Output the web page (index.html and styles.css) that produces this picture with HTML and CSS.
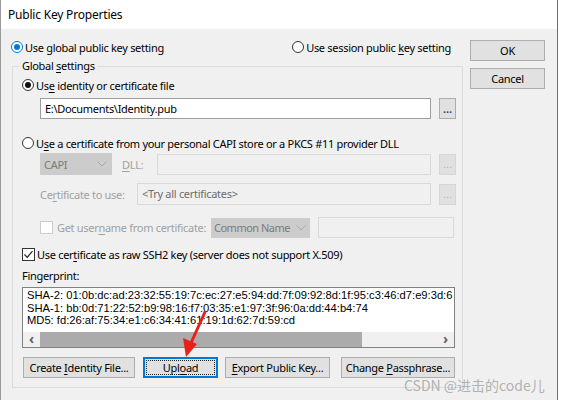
FILE: index.html
```html
<!DOCTYPE html>
<html lang="en">
<head>
    <meta charset="UTF-8">
    <title>Public Key Properties</title>
    <link rel="stylesheet" href="styles.css">
</head>
<body>

    <div class="window">
        <div class="titlebar">Public Key Properties</div>

        <div class="client">
            <div class="main">
                <div class="scope-row">
                    <label class="opt"><span class="radio checked focus"></span><span>Use global public key setting</span></label>
                    <label class="opt session"><span class="radio"></span><span>Use session public <u>k</u>ey setting</span></label>
                </div>

                <div class="group">
                    <div class="group-title">Global <u>s</u>ettings</div>

                    <label class="opt row-radio1"><span class="radio checked"></span><span>Us<u>e</u> identity or certificate file</span></label>

                    <div class="field-row row-file">
                        <div class="textbox file-box">E:\Documents\Identity.pub</div>
                        <button class="browse">...</button>
                    </div>

                    <label class="opt row-radio2"><span class="radio"></span><span>U<u>s</u>e a certificate from your personal CAPI store or a PKCS #11 provider DLL</span></label>

                    <div class="field-row row-capi">
                        <div class="select capi-select"><span>CAPI</span> <svg class="chev" width="10" height="6" viewBox="0 0 10 6"><path d="M0.5 0.5 L5 5 L9.5 0.5" fill="none" stroke="#a8a8a8" stroke-width="1"/></svg></div>
                        <span class="dim dll-label"><u>D</u>LL:</span>
                        <div class="textbox disabled dll-box"></div>
                        <button class="browse disabled">...</button>
                    </div>

                    <div class="field-row row-cert">
                        <span class="dim cert-label">Ce<u>r</u>tificate to use:</span>
                        <div class="textbox disabled cert-box">&lt;Try all certificates&gt;</div>
                        <button class="browse disabled">...</button>
                    </div>

                    <div class="field-row row-user">
                        <span class="check disabled"></span>
                        <span class="dim user-label">Get user<u>n</u>ame from certificate:</span>
                        <div class="select name-select"><span>Common Name</span> <svg class="chev" width="10" height="6" viewBox="0 0 10 6"><path d="M0.5 0.5 L5 5 L9.5 0.5" fill="none" stroke="#a8a8a8" stroke-width="1"/></svg></div>
                        <div class="textbox disabled user-box"></div>
                    </div>

                    <label class="opt row-raw">
                        <span class="check"><svg width="11" height="11" viewBox="0 0 11 11"><path d="M1.5 5.5 L4.2 8.3 L9.5 2.2" fill="none" stroke="#222" stroke-width="1.2"/></svg></span>
                        <span>Use cer<u>t</u>ificate as raw SSH2 key (server does not support X.509)</span>
                    </label>

                    <div class="fp-label">Fingerprint:</div>

                    <div class="fingerprint">
                        <div class="fp-text">
                            <div>SHA-2: 01:0b:dc:ad:23:32:55:19:7c:ec:27:e5:94:dd:7f:09:92:8d:1f:95:c3:46:d7:e9:3d:6</div>
                            <div>SHA-1: bb:0d:71:22:52:b9:98:16:f7:03:35:e1:97:3f:96:0a:dd:44:b4:74</div>
                            <div>MD5: fd:26:af:75:34:e1:c6:34:41:61:19:1d:62:7d:59:cd</div>
                        </div>
                        <div class="hscroll">
                            <span class="sb-btn">&lsaquo;</span>
                            <span class="sb-thumb"></span>
                            <span class="sb-track"></span>
                            <span class="sb-btn">&rsaquo;</span>
                        </div>
                    </div>

                    <div class="action-row">
                        <button class="btn btn-create">Create <u>I</u>dentity File...</button>
                        <button class="btn btn-upload"><span class="focus-ring">Upl<u>o</u>ad</span></button>
                        <button class="btn btn-export"><u>E</u>xport Public Key...</button>
                        <button class="btn btn-change">Change <u>P</u>assphrase...</button>
                    </div>
                </div>
            </div>

            <div class="side">
                <button class="btn side-btn">OK</button>
                <button class="btn side-btn">Cancel</button>
            </div>
        </div>

        <!-- annotation arrow pasted over the screenshot -->
        <svg class="arrow" width="561" height="400" viewBox="0 0 561 400">
            <path d="M205 312 L191 343" stroke="#e8201c" stroke-width="3" stroke-linecap="round"/>
            <path d="M186 357 L183 338 L197 344 Z" fill="#e8201c"/>
        </svg>

        <div class="watermark">CSDN @进击的code儿</div>
    </div>

</body>
</html>
```

FILE: styles.css
```css
body {
    margin: 0;
    padding: 0;
    background-color: #fff;
    font-family: 'Noto Sans', 'Liberation Sans', sans-serif;
    font-size: 11px;
    letter-spacing: -0.3px;
    color: #000;
}

u {
    text-decoration-thickness: 1px;
    text-underline-offset: 2px;
}

.window {
    position: relative;
    width: 556px;
    height: 400px;
    border-right: 1px solid #6f6f6f;
    border-left: 1px solid #9a9a9a;
    overflow: hidden;
}

.titlebar {
    height: 29px;
    line-height: 30px;
    padding-left: 7px;
    background-color: #fff;
    font-size: 12px;
    letter-spacing: -0.2px;
}

.client {
    display: flex;
    background-color: #f0f0f0;
    height: 371px;
}

.main {
    width: 451px;
    padding: 10px 0 0 11px;
}

.side {
    display: flex;
    flex-direction: column;
    gap: 7px;
    margin-left: 7px;
    padding-top: 11px;
}

/* radio / checkbox rows */

.opt {
    display: flex;
    align-items: center;
    height: 16px;
    white-space: nowrap;
}

.radio {
    box-sizing: border-box;
    width: 12px;
    height: 12px;
    border: 1px solid #333;
    border-radius: 50%;
    background-color: #fff;
    margin-right: 2px;
    display: flex;
    align-items: center;
    justify-content: center;
}

.radio.checked::after {
    content: '';
    width: 6px;
    height: 6px;
    border-radius: 50%;
    background-color: #111;
}

.radio.focus {
    border-color: #0078d7;
}

.radio.focus::after {
    background-color: #0078d7;
}

.check {
    box-sizing: border-box;
    width: 13px;
    height: 13px;
    border: 1px solid #333;
    background-color: #fff;
    margin-right: 2px;
    display: flex;
    align-items: center;
    justify-content: center;
}

.check.disabled {
    border-color: #cccccc;
}

.scope-row {
    display: flex;
    height: 16px;
    margin-left: -1px;
}

.session {
    margin-left: auto;
    margin-right: 12px;
}

/* group box */

.group {
    box-sizing: border-box;
    width: 451px;
    height: 322px;
    margin-top: 11px;
    border: 1px solid #dcdcdc;
    padding: 0 0 0 9px;
}

.group-title {
    width: fit-content;
    margin: -8px 0 0 -2px;
    padding: 0 2px;
    height: 14px;
    line-height: 14px;
    background-color: #f0f0f0;
}

.row-radio1 {
    margin-top: 4px;
}

.row-radio2 {
    margin-top: 16px;
}

.field-row {
    display: flex;
    align-items: center;
    padding-left: 18px;
}

.row-file {
    margin-top: 5px;
    height: 21px;
}

.row-capi {
    margin-top: 2px;
    height: 22px;
}

.row-cert {
    margin-top: 8px;
    height: 22px;
}

.row-user {
    margin-top: 12px;
    height: 21px;
}

.row-raw {
    margin-top: 8px;
}

.textbox {
    box-sizing: border-box;
    height: 21px;
    line-height: 19px;
    border: 1px solid #9d9d9d;
    background-color: #fff;
    padding-left: 4px;
    white-space: nowrap;
}

.textbox.disabled {
    border-color: #d9d9d9;
    background-color: #f0f0f0;
    color: #6d6d6d;
}

.file-box {
    width: 391px;
}

.browse {
    box-sizing: border-box;
    width: 17px;
    height: 21px;
    margin-left: 8px;
    padding: 0;
    border: 1px solid #adadad;
    background-color: #e1e1e1;
    font-family: 'Liberation Sans', sans-serif;
    font-size: 11px;
    font-weight: bold;
    letter-spacing: 0;
    line-height: 12px;
    color: #2d4f80;
}

.browse.disabled {
    border-color: #d6d6d6;
    background-color: #e0e0e0;
    color: #b4b4b4;
    font-weight: normal;
}

.dim {
    color: #a0a0a0;
    white-space: nowrap;
}

.select {
    box-sizing: border-box;
    height: 22px;
    display: flex;
    align-items: center;
    justify-content: space-between;
    padding: 0 5px 0 4px;
    background-color: #cccccc;
    color: #7b7b7b;
    white-space: nowrap;
}

.capi-select {
    width: 72px;
}

.dll-label {
    margin-left: 10px;
    width: 35px;
}

.dll-box {
    width: 274px;
}

.cert-label {
    width: 97px;
}

.cert-box {
    width: 294px;
    height: 22px;
}

.user-label {
    margin-left: 2px;
    width: 154px;
}

.name-select {
    width: 99px;
    height: 20px;
    padding: 0 4px 0 3px;
    letter-spacing: -0.5px;
}

.user-box {
    width: 136px;
    margin-left: 8px;
}

.fp-label {
    margin-top: 7px;
    height: 14px;
    line-height: 14px;
}

/* fingerprint box */

.fingerprint {
    box-sizing: border-box;
    width: 433px;
    height: 61px;
    margin-top: 4px;
    border: 1px solid #828282;
    background-color: #fff;
    display: flex;
    flex-direction: column;
}

.fp-text {
    flex: 1;
    overflow: hidden;
    padding: 1px 0 0 4px;
    font-family: 'Liberation Sans', Arial, sans-serif;
    font-size: 11.2px;
    letter-spacing: 0;
    line-height: 12.5px;
    white-space: nowrap;
}

.hscroll {
    display: flex;
    height: 15px;
    background-color: #f0f0f0;
}

.sb-btn {
    width: 17px;
    text-align: center;
    line-height: 14px;
    font-size: 14px;
    font-weight: bold;
    color: #606060;
}

.sb-thumb {
    width: 322px;
    background-color: #ababab;
}

.sb-track {
    flex: 1;
}

/* buttons */

.action-row {
    display: flex;
    margin-top: 9px;
    padding-left: 1px;
}

.btn {
    box-sizing: border-box;
    height: 21px;
    padding: 0;
    border: 1px solid #adadad;
    background-color: #e1e1e1;
    font-family: inherit;
    font-size: 11px;
    letter-spacing: -0.3px;
    color: #000;
    white-space: nowrap;
}

.btn-create {
    width: 112px;
}

.btn-upload {
    width: 75px;
    margin-left: 8px;
    border: 2px solid #0078d7;
    padding: 1px;
}

.focus-ring {
    display: block;
    height: 100%;
    box-sizing: border-box;
    border: 1px dotted #222;
    line-height: 13px;
}

.btn-export {
    width: 105px;
    margin-left: 7px;
}

.btn-change {
    width: 114px;
    margin-left: 11px;
}

.side-btn {
    width: 75px;
    height: 21px;
}

/* overlays */

.arrow {
    position: absolute;
    left: -1px;
    top: 0;
    pointer-events: none;
}

.watermark {
    position: absolute;
    left: 403px;
    top: 375px;
    font-family: 'Noto Sans CJK SC', sans-serif;
    font-size: 14px;
    letter-spacing: 0;
    color: rgba(160, 160, 160, 0.8);
    white-space: nowrap;
}
```
